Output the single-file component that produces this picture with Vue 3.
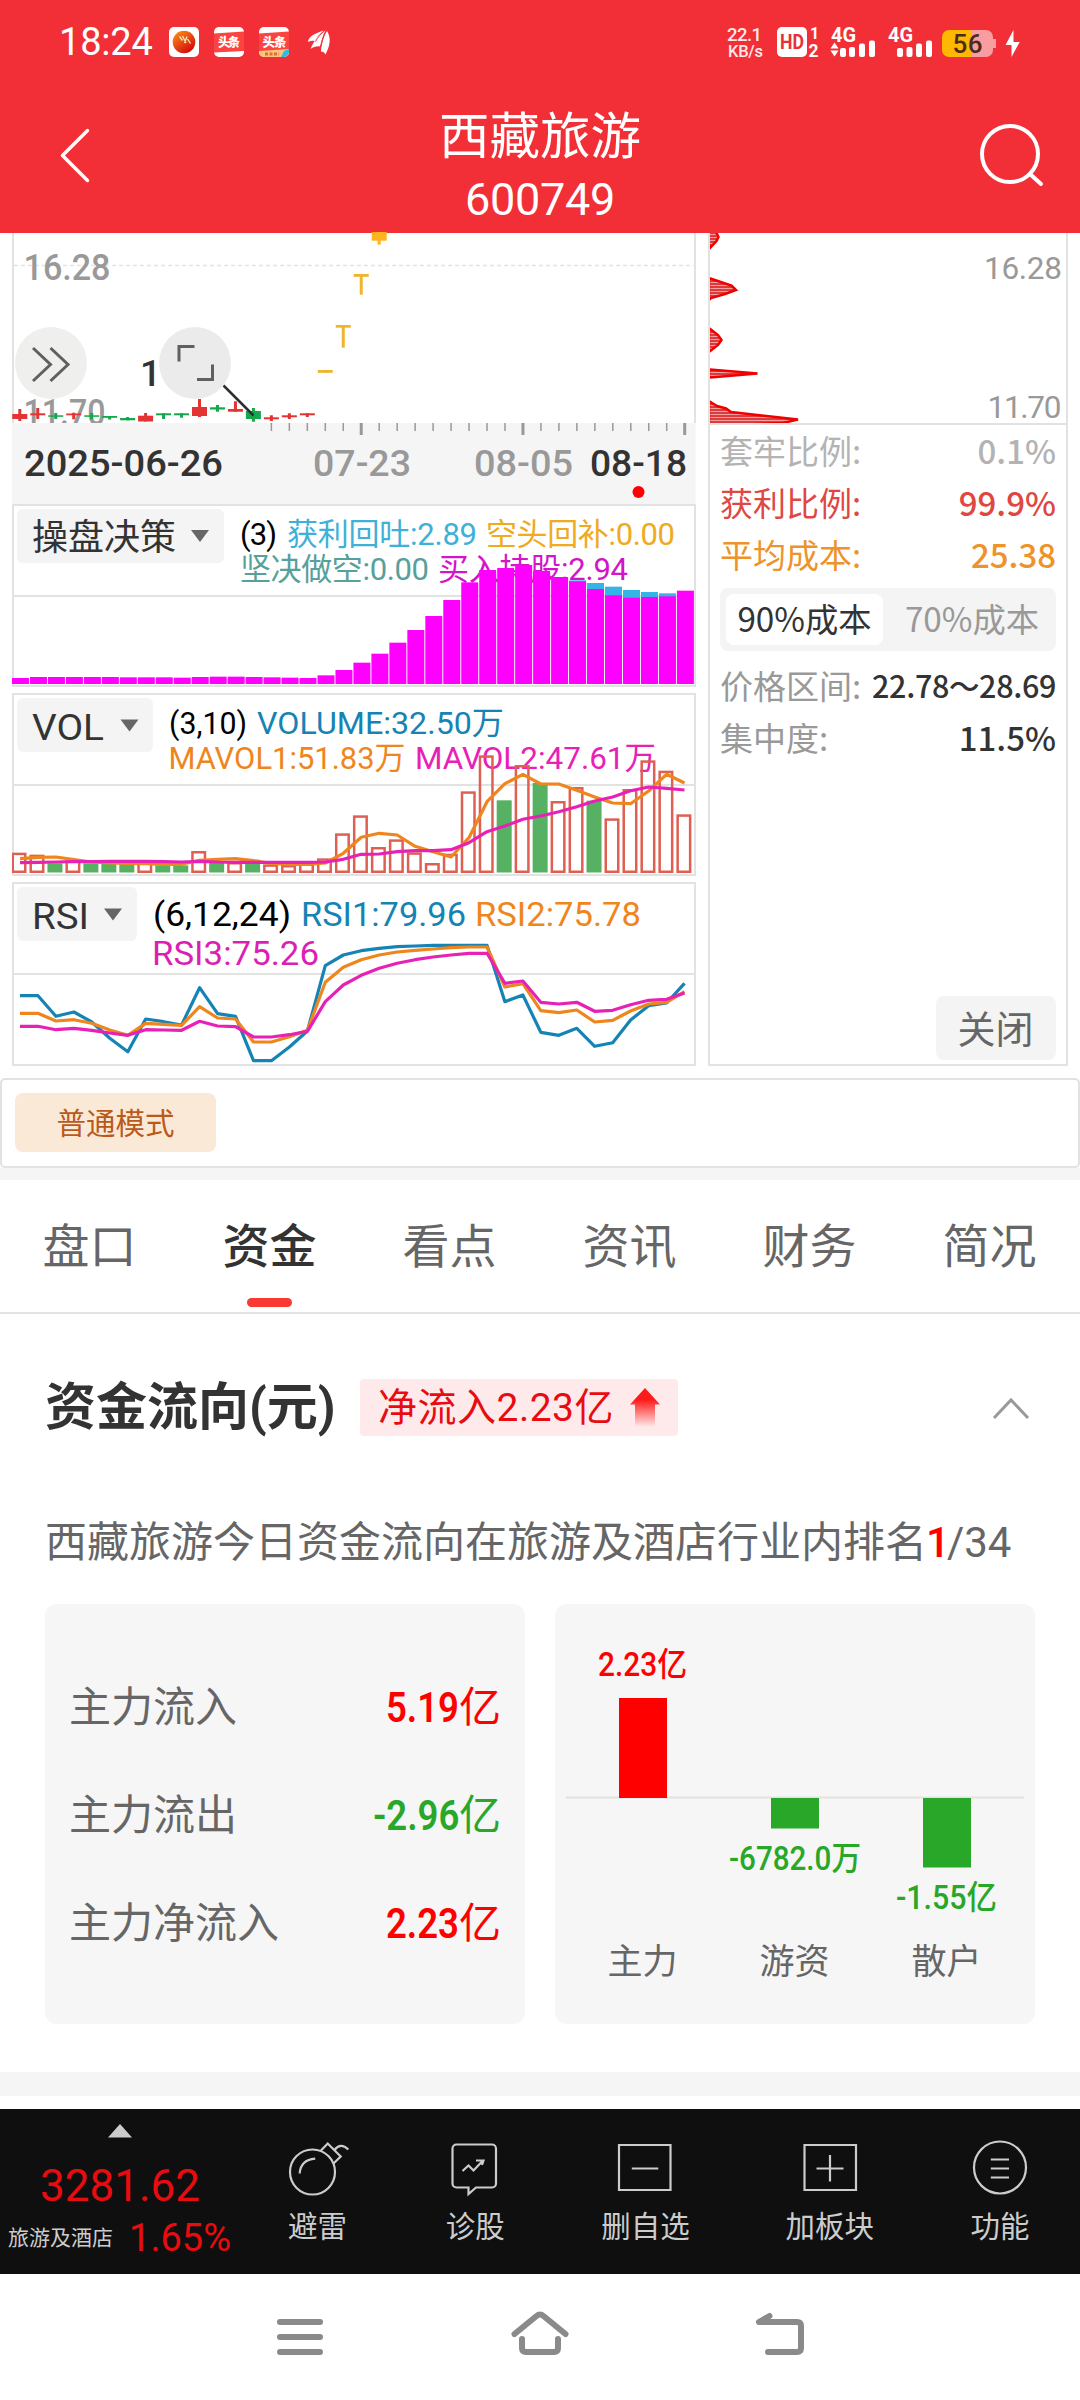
<script setup>
const STEP = 17.97
const cx = (i) => 19.8 + STEP * i

const R = '#e33333', G = '#12a84c', Y = '#f0b42f'
// [colour, body top, body bottom, wick top, wick bottom]
const candles = [
  [R, 414, 419, 409, 421], [R, 413.3, 415.3, 408, 419], [G, 415.3, 416.8, 413, 419], [R, 413.5, 415.3, 412.7, 419.3],
  [G, 415.3, 416.8, 413, 419.3], [G, 416, 417.8, 416, 419.5], [G, 418, 420.3, 417, 420.3], [R, 415.7, 421.5, 413, 421.5],
  [G, 413.3, 415.3, 413.3, 419], [G, 413.3, 415.3, 413.3, 417.7], [R, 407, 416, 399, 417], [G, 407.3, 409.5, 405, 411.7],
  [R, 409, 411.7, 401.3, 411.7], [G, 411, 419, 408, 421.7], [R, 417.3, 419.3, 415.3, 421], [R, 415.3, 417.3, 413.3, 419],
  [R, 413.3, 415.3, 413.3, 417], [Y, 370, 372.8, 370, 372.8], [Y, 325, 327.7, 325, 347.7], [Y, 274, 276.8, 274, 294.7],
  ['#ffb41f', 232, 240.7, 232, 244.7]
].map(([c, a, b, w1, w2], i) => ({ c, a, b, w1, w2, x: cx(i) }))

const ticks = Array.from({ length: 24 }, (_, k) => k + 14).map((i) => ({ x: cx(i), major: (i - 19) % 9 === 0 }))

const decTops = [549, 546, 546, 546, 546, 546, 547, 547, 547, 548, 546, 545, 545, 546, 547, 548, 549, 541, 525, 503, 476, 443, 405, 363, 315, 262, 225, 219, 210, 228, 246, 259, 282, 301, 308, 306, 304, 287]
const decBlue = { 31: 256, 32: 264, 33: 275, 34: 285, 35: 291, 36: 295 }
const decBars = decTops.map((t, i) => ({ x: 12 + STEP * i, y: 495 + t / 3, b: decBlue[i] ? 495 + decBlue[i] / 3 : null }))

const green = [2, 4, 5, 6, 8, 9, 11, 13, 27, 29, 32]
const volBars = [503, 509, 535, 526, 535, 535, 535, 526, 541, 541, 498, 529, 531, 524, 538, 540, 535, 520, 445, 391, 486, 463, 502, 534, 506, 319, 211, 346, 240, 294, 348, 306, 347, 400, 312, 226, 257, 388]
  .map((t, i) => ({ x: 11.5 + STEP * i, y: 685 + t / 3, g: green.includes(i) }))

const line = (arr, base) => arr.map((v, i) => `${(20 + 17.96 * i).toFixed(1)},${(base + v / 3).toFixed(1)}`).join(' ')
const vol1 = line([521, 517, 516, 524, 531, 534, 535, 536, 538, 538, 526, 523, 521, 527, 535, 538, 538, 534, 505, 457, 445, 450, 484, 500, 516, 458, 350, 296, 268, 297, 297, 316, 336, 354, 356, 318, 268, 294], 685)
const vol2 = line([533, 532, 531, 530, 530, 529, 529, 529, 530, 531, 529, 531, 532, 532, 532, 532, 532, 531, 523, 508, 507, 500, 497, 497, 494, 473, 440, 423, 403, 393, 380, 365, 348, 336, 317, 306, 310, 315], 685)
const rsi1 = line([362, 362, 424, 411, 441, 490, 530, 432, 440, 450, 338, 416, 424, 557, 557, 516, 468, 272, 240, 227, 220, 215, 213, 211, 211, 211, 211, 380, 360, 472, 481, 460, 514, 503, 435, 392, 384, 325], 875)
const rsi2 = line([415, 415, 438, 434, 445, 465, 481, 445, 448, 451, 395, 429, 432, 501, 501, 485, 466, 322, 277, 254, 240, 231, 226, 222, 218, 216, 216, 336, 326, 407, 413, 405, 441, 436, 408, 387, 382, 350], 875)
const rsi3 = line([454, 454, 464, 460, 466, 474, 481, 464, 465, 466, 439, 453, 455, 486, 486, 479, 469, 380, 330, 301, 280, 265, 254, 246, 240, 235, 235, 325, 318, 382, 387, 382, 409, 406, 389, 376, 373, 354], 875)

const chips = [
  '708,228 716,232 718.5,237 716.5,241 709,249',
  '709,278 731.5,285.5 736,290 725,294 711,298 709,300',
  '709,328 718,335 721.5,340 718,345 709,352',
  '709,369.5 757.5,373.5 709,377.5',
  '709,401 717,406 726,408.5 731,412 798,419.5 783,423 709,426'
]

const tabs = ['盘口', '资金', '看点', '资讯', '财务', '简况']
const flows = [
  { k: '主力流入', n: '5.19', c: 'up' },
  { k: '主力流出', n: '-2.96', c: 'down' },
  { k: '主力净流入', n: '2.23', c: 'up' }
]
</script>

<template>
  <div class="phone">
    <header class="top">
      <div class="status">
        <span class="clock">18:24</span>
        <svg class="apps" width="166" height="34" viewBox="167 25 166 34">
          <defs>
            <linearGradient id="ball" x1="0" y1="0" x2="0.7" y2="1"><stop offset="0" stop-color="#ff9a1a" /><stop offset="1" stop-color="#d4060c" /></linearGradient>
            <clipPath id="a2"><rect x="214" y="27" width="30" height="30" rx="5" /></clipPath>
            <clipPath id="a3"><rect x="259" y="27" width="30" height="30" rx="5" /></clipPath>
          </defs>
          <rect x="169" y="27" width="30" height="30" rx="5" fill="#fff" />
          <circle cx="184" cy="42" r="11.3" fill="url(#ball)" />
          <path d="M179.500 36.500l3 4M182.500 36l3.500 7M187 36.500l-2.500 6.500M187.500 39l3 4.500" stroke="#ffe9b8" stroke-width="1.300" fill="none" />
          <g clip-path="url(#a2)">
            <rect x="214" y="27" width="30" height="30" fill="#fff" />
            <path d="M214 33.500L244 31.500V51L214 52.500Z" fill="#fb4440" />
            <text x="218" y="46.500" font-size="12" font-weight="900" fill="#fff" textLength="22">头条</text>
          </g>
          <g clip-path="url(#a3)">
            <rect x="259" y="27" width="30" height="30" fill="#fff" />
            <path d="M259 33.500L289 31.500V52H259Z" fill="#fb4440" />
            <path d="M259 51L289 49V57H259Z" fill="#ffc37a" />
            <text x="262.500" y="46.500" font-size="12.500" font-weight="900" fill="#fff" textLength="24">头条</text>
            <path d="M265 54h14" stroke="#d5723a" stroke-width="3" stroke-dasharray="3 1.500" />
            <path d="M281 57l3-6 5-2v8z" fill="#26bfe8" />
          </g>
          <g fill="#fff">
            <path d="M308 42C308 37 315 33 324 30.500C319 34 316.500 37.500 315 41C312.500 40.500 310 41 308 42Z" />
            <path d="M310.500 49C314 41 318.500 34 325.500 30.500C322.500 36 321.500 41 320 46.500C316.500 46 313.500 47 310.500 49Z" />
            <path d="M321 51.500C321.500 44 323.500 36 327 31C331.500 38 330 46 325.500 54.500C324.500 52.500 323 51.500 321 51.500Z" />
          </g>
          <path d="M315.500 41.500C318 37 321 33.500 324.500 31M320.800 47C322 41 323.500 35.500 326 31.500" stroke="#f22f37" stroke-width="1" fill="none" />
        </svg>
        <svg class="signals" width="300" height="34" viewBox="724 25 300 34" fill="#fff">
          <g font-weight="500" fill="#ffe9e9">
            <text x="727" y="41" font-size="18.500" textLength="35">22.1</text>
            <text x="728" y="56.500" font-size="16.500" textLength="35">KB/s</text>
          </g>
          <rect x="777" y="27" width="30" height="30" rx="5" />
          <g font-weight="700">
            <text x="780" y="49" font-size="20" fill="#e8303a" textLength="24" lengthAdjust="spacingAndGlyphs">HD</text>
            <text x="810" y="38.500" font-size="16">1</text>
            <text x="808.500" y="56.500" font-size="17.500">2</text>
            <text x="831" y="42" font-size="20" textLength="25" lengthAdjust="spacingAndGlyphs">4G</text>
            <text x="888" y="42" font-size="20" textLength="25" lengthAdjust="spacingAndGlyphs">4G</text>
          </g>
          <path d="M830.500 48.500l4-6 4 6zM830.500 50.500l4 6 4-6z" />
          <rect x="840" y="48" width="6" height="9" rx="2" /><rect x="849" y="47" width="6" height="10" rx="2" /><rect x="859" y="43.500" width="6" height="13.500" rx="2" /><rect x="869" y="40.500" width="6" height="16.500" rx="2" />
          <rect x="897" y="48" width="6" height="9" rx="2" /><rect x="906.500" y="47" width="6" height="10" rx="2" /><rect x="916" y="43.500" width="6" height="13.500" rx="2" /><rect x="926" y="40.500" width="6" height="16.500" rx="2" />
          <path d="M971 30h15a7 7 0 0 1 7 7v2h3v9h-3v2a7 7 0 0 1-7 7h-15z" fill="#f99da0" />
          <path d="M971 30h-22a7 7 0 0 0-7 7v13a7 7 0 0 0 7 7h22z" fill="#ffb800" />
          <text x="952.500" y="53" font-size="26" font-weight="500" fill="#4a2c1a" textLength="30">56</text>
          <path d="M1013.500 30l-8 15h6v12l8.200-15h-6.200z" />
        </svg>
      </div>
      <div class="bar">
        <svg width="56" height="64" viewBox="46 124 56 64"><path d="M87.500 130.500L62.500 155.500L87.500 180.500" fill="none" stroke="#fff" stroke-width="3.500" stroke-linecap="round" stroke-linejoin="round" /></svg>
        <div class="name"><b>西藏旅游</b><span>600749</span></div>
        <svg width="72" height="72" viewBox="975 120 72 72" fill="none" stroke="#fff" stroke-width="4" stroke-linecap="round"><circle cx="1010" cy="154" r="28" /><path d="M1030 174L1041 184" /></svg>
      </div>
    </header>

    <section class="charts">
      <div class="left">
        <svg class="k" width="684" height="190" viewBox="12 233 684 190">
          <path d="M13 233V423M695 233V423" stroke="#e2e2e2" stroke-width="2" />
          <path d="M14 265.500H694" stroke="#e4e4e4" stroke-width="1.500" stroke-dasharray="4 3" />
          <g fill="#999" font-size="36" font-weight="500">
            <text x="23.500" y="280" textLength="87" lengthAdjust="spacingAndGlyphs">16.28</text>
            <text x="23.500" y="424.500" textLength="82" lengthAdjust="spacingAndGlyphs">11.70</text>
          </g>
          <text x="140" y="385.500" font-size="37" font-weight="500" fill="#333">1</text>
          <circle cx="51" cy="363" r="36" fill="#efefee" />
          <circle cx="195" cy="363" r="36" fill="#ebebeb" />
          <g fill="none" stroke="#606060" stroke-width="3">
            <path d="M33 348l17.500 16.500L33 381M50.500 348L68 364.500L50.500 381" />
            <path d="M194.500 346.500H179V361.500M197 379.500H212.500V364.500" />
          </g>
          <g v-for="(c, i) in candles" :key="i" :fill="c.c">
            <rect :x="c.x - 7.5" :y="c.a" width="15" :height="c.b - c.a" />
            <rect :x="c.x - 1.5" :y="c.w1" width="3" :height="c.w2 - c.w1" />
          </g>
          <path d="M223.500 385.500L253.500 415.500" stroke="#2c302e" stroke-width="2.500" />
        </svg>
        <svg class="dates" width="684" height="81" viewBox="12 423 684 81">
          <rect x="12" y="423" width="683.500" height="82" fill="#f5f5f5" />
          <rect v-for="t in ticks" :key="t.x" :x="t.x - (t.major ? 1.5 : 0.75)" y="423" :width="t.major ? 3 : 1.500" :height="t.major ? 12 : 8" fill="#999" />
          <g font-size="36" font-weight="500" fill="#999">
            <text x="24" y="476" fill="#333" textLength="199" lengthAdjust="spacingAndGlyphs">2025-06-26</text>
            <text x="313" y="476" textLength="98" lengthAdjust="spacingAndGlyphs">07-23</text>
            <text x="474" y="476" textLength="99" lengthAdjust="spacingAndGlyphs">08-05</text>
            <text x="590" y="476" fill="#333" textLength="97" lengthAdjust="spacingAndGlyphs">08-18</text>
          </g>
          <circle cx="638.500" cy="492" r="6" fill="#f00" />
        </svg>
        <svg class="ind" width="684" height="183" viewBox="12 504 684 183">
          <path d="M13 505H695V686H13ZM13 596H695" class="grid" />
          <rect x="17" y="509" width="207" height="54" rx="6" fill="#f4f4f4" />
          <text x="32" y="550" font-size="36" fill="#333">操盘决策</text>
          <path d="M191 530H209L200 542Z" fill="#666" />
          <g font-size="31">
            <text x="240" y="545" fill="#000" textLength="37">(3)</text>
            <text x="287" y="545" fill="#3fb0d8" textLength="190">获利回吐:2.89</text>
            <text x="486" y="545" fill="#f0aa1e" textLength="189">空头回补:0.00</text>
            <text x="240" y="580" fill="#58a09a" textLength="189">坚决做空:0.00</text>
            <text x="438" y="580" fill="#d414c8" textLength="190">买入持股:2.94</text>
          </g>
          <g v-for="(b, i) in decBars" :key="i">
            <rect v-if="b.b" :x="b.x" :y="b.b" width="17" :height="684 - b.b" fill="#37b4e6" />
            <rect :x="b.x" :y="b.y" width="17" :height="684 - b.y" fill="#f0f" />
          </g>
        </svg>
        <svg class="ind" width="684" height="183" viewBox="12 693 684 183">
          <path d="M13 694H695V875H13ZM13 785H695" class="grid" />
          <rect x="17" y="698" width="136" height="54" rx="6" fill="#f4f4f4" />
          <text x="32" y="739.500" font-size="36" fill="#333" textLength="72" lengthAdjust="spacingAndGlyphs">VOL</text>
          <path d="M120.500 719.500H138.500L129.500 731.500Z" fill="#666" />
          <g font-size="32">
            <text x="169" y="734" fill="#000" textLength="78" lengthAdjust="spacingAndGlyphs">(3,10)</text>
            <text x="257" y="734" fill="#1683b5" textLength="247" lengthAdjust="spacingAndGlyphs">VOLUME:32.50万</text>
            <text x="168.500" y="769" fill="#ef861d" textLength="237" lengthAdjust="spacingAndGlyphs">MAVOL1:51.83万</text>
            <text x="415" y="769" fill="#e821b6" textLength="241" lengthAdjust="spacingAndGlyphs">MAVOL2:47.61万</text>
          </g>
          <template v-for="(b, i) in volBars" :key="i">
            <rect v-if="b.g" :x="b.x" :y="b.y" width="15" :height="872.5 - b.y" fill="#57b163" />
            <rect v-else :x="b.x + 1.25" :y="b.y + 1.25" width="12.500" :height="870.5 - b.y" fill="none" stroke="#de6052" stroke-width="2.500" />
          </template>
          <polyline :points="vol1" class="ln" stroke="#ef861d" />
          <polyline :points="vol2" class="ln" stroke="#e821b6" />
        </svg>
        <svg class="ind last" width="684" height="184" viewBox="12 882 684 184">
          <path d="M13 883H695V1065H13ZM13 974H695" class="grid" />
          <rect x="17" y="887" width="120" height="54" rx="6" fill="#f4f4f4" />
          <text x="32" y="929" font-size="36" fill="#333" textLength="57" lengthAdjust="spacingAndGlyphs">RSI</text>
          <path d="M104 908.500H122L113 920.500Z" fill="#666" />
          <g font-size="33.500">
            <text x="153" y="926" fill="#000" textLength="138" lengthAdjust="spacingAndGlyphs">(6,12,24)</text>
            <text x="301" y="926" fill="#1683b5" textLength="165" lengthAdjust="spacingAndGlyphs">RSI1:79.96</text>
            <text x="475" y="926" fill="#ef861d" textLength="166" lengthAdjust="spacingAndGlyphs">RSI2:75.78</text>
            <text x="152" y="965" fill="#dc1fb4" textLength="167" lengthAdjust="spacingAndGlyphs">RSI3:75.26</text>
          </g>
          <polyline :points="rsi1" class="ln" stroke="#1683b5" />
          <polyline :points="rsi2" class="ln" stroke="#ef861d" />
          <polyline :points="rsi3" class="ln" stroke="#e821b6" />
        </svg>
      </div>

      <div class="right">
        <svg class="dist" width="360" height="192" viewBox="708 233 360 192">
          <defs>
            <pattern id="stripe" width="6" height="3" patternUnits="userSpaceOnUse"><rect width="6" height="3" fill="#de3c3c" /><rect width="6" height="1" fill="#f0a0a0" /></pattern>
            <clipPath id="inside"><rect x="710" y="233" width="350" height="190" /></clipPath>
          </defs>
          <g clip-path="url(#inside)"><polygon v-for="p in chips" :key="p" :points="p" fill="url(#stripe)" stroke="#f00000" stroke-width="2.500" /></g>
          <path d="M709 233V425M1067 233V425M708 424H1068" fill="none" stroke="#e2e2e2" stroke-width="2" />
          <g fill="#999" font-size="31.500">
            <text x="984" y="279" textLength="78">16.28</text>
            <text x="987.500" y="418" textLength="74">11.70</text>
          </g>
        </svg>
        <div class="stats">
          <div class="row pale"><span>套牢比例:</span><b>0.1%</b></div>
          <div class="row red"><span>获利比例:</span><b>99.9%</b></div>
          <div class="row amber"><span>平均成本:</span><b>25.38</b></div>
          <div class="seg"><span class="on">90%成本</span><span>70%成本</span></div>
          <div class="row dark"><span>价格区间:</span><b class="small">22.78～28.69</b></div>
          <div class="row dark"><span>集中度:</span><b>11.5%</b></div>
          <button class="close">关闭</button>
        </div>
      </div>
    </section>

    <div class="mode"><span>普通模式</span></div>
    <nav class="tabs"><span v-for="t in tabs" :key="t" :class="{ active: t === '资金' }">{{ t }}</span></nav>

    <section class="fund">
      <div class="head">
        <h2>资金流向(元)</h2>
        <div class="badge">
          <span>净流入2.23亿</span>
          <svg width="30" height="40" viewBox="0 0 30 40"><defs><linearGradient id="fade" x1="0" y1="0" x2="0" y2="1"><stop offset="0.3" stop-color="#ff1a1a" /><stop offset="1" stop-color="#ff1a1a" stop-opacity="0" /></linearGradient></defs><path d="M15 0L30 16.500H25V39H5V16.500H0Z" fill="url(#fade)" /></svg>
        </div>
        <svg class="chev" width="38" height="24" viewBox="0 0 38 24"><path d="M2 21L19 3L36 21" fill="none" stroke="#999" stroke-width="3" /></svg>
      </div>
      <p class="rank">西藏旅游今日资金流向在旅游及酒店行业内排名<b>1</b>/34</p>
      <div class="cards">
        <div class="card list">
          <div v-for="f in flows" :key="f.k" class="flow"><span>{{ f.k }}</span><span :class="f.c"><i>{{ f.n }}</i>亿</span></div>
        </div>
        <div class="card">
          <svg width="480" height="420" viewBox="555 1604 480 420">
            <path d="M566 1797.500H1024" stroke="#e2e2e2" stroke-width="2" />
            <rect x="619" y="1698" width="48" height="100" fill="#f00" />
            <rect x="771" y="1798" width="48" height="30.500" fill="#28a728" />
            <rect x="923" y="1798" width="48" height="69.500" fill="#28a728" />
            <g font-size="33" font-weight="500">
              <text x="598" y="1676" fill="#f00" textLength="89" lengthAdjust="spacingAndGlyphs">2.23亿</text>
              <text x="729" y="1870" fill="#28a728" textLength="132" lengthAdjust="spacingAndGlyphs">-6782.0万</text>
              <text x="896" y="1909" fill="#28a728" textLength="101" lengthAdjust="spacingAndGlyphs">-1.55亿</text>
            </g>
            <g font-size="35" fill="#666" text-anchor="middle">
              <text x="642.500" y="1974">主力</text><text x="794.500" y="1974">游资</text><text x="946.500" y="1974">散户</text>
            </g>
          </svg>
        </div>
      </div>
    </section>
    <div class="band"></div>

    <footer class="tools">
      <div class="index">
        <svg width="24" height="14" viewBox="0 0 24 14"><path d="M12 0L24 13.500H0Z" fill="#ccc" /></svg>
        <strong>3281.62</strong>
        <div><small>旅游及酒店</small><em>1.65%</em></div>
      </div>
      <div class="items">
        <div><svg width="64" height="62" viewBox="285.500 2138 64 62"><circle cx="312" cy="2172" r="22.500" /><path d="M319.500 2151.500L327.200 2143.500L340.200 2156.500L332.500 2164M334 2150Q340 2142 347.800 2149.500M299.200 2173.500Q300 2160 314.700 2158.700" /></svg><span>避雷</span></div>
        <div><svg width="60" height="62" viewBox="444.500 2138 60 62"><path d="M456 2144.500H491.500a4 4 0 0 1 4 4V2183.500a4 4 0 0 1-4 4H475.500L468 2194V2187.500H456a4 4 0 0 1-4-4V2148.500a4 4 0 0 1 4-4ZM462 2171L468 2165.500L473 2170.500L482.500 2160.500M475.500 2160.500H483L481.500 2165" /></svg><span>诊股</span></div>
        <div><svg width="60" height="62" viewBox="615.700 2138 60 62"><path d="M619.700 2145H671.200V2190H619.700ZM632.500 2168.500H659" /></svg><span>删自选</span></div>
        <div><svg width="60" height="62" viewBox="799.500 2138 60 62"><path d="M804 2145H855.500V2190H804ZM816 2168.500H843M829.500 2155V2181.500" /></svg><span>加板块</span></div>
        <div><svg width="60" height="62" viewBox="970.700 2138 60 62"><circle cx="1000.700" cy="2167.500" r="26" /><path d="M991.500 2159.500H1009.700M991.500 2168.500H1009.700M991.500 2177.500H1009.700" /></svg><span>功能</span></div>
      </div>
    </footer>
    <div class="sys">
      <svg width="52" height="42" viewBox="274 2316 52 42"><path d="M280 2322H320M280 2337H320M280 2352H320" /></svg>
      <svg width="64" height="48" viewBox="508 2308 64 48"><path d="M514.500 2334L536.500 2316Q540 2313 543.500 2316L565.500 2334M522 2339V2348Q522 2352 526 2352H554Q558 2352 558 2348V2339" /></svg>
      <svg width="52" height="46" viewBox="754 2311 52 46"><path d="M769.500 2316L759 2322H797Q801 2322 801 2326V2348Q801 2352 797 2352H768" /></svg>
    </div>
  </div>
</template>

<style>
body { margin: 0; background: #fff; }
</style>

<style scoped>
.phone { width: 1080px; height: 2400px; display: flex; flex-direction: column; background: #fff; overflow: hidden; font-family: Roboto, "Noto Sans CJK SC", sans-serif; color: #333; }
.phone svg { display: block; flex: none; }
.top { height: 233px; flex: none; background: #f22f37; color: #fff; box-sizing: border-box; padding-top: 25px; }
.status { display: flex; align-items: center; height: 34px; padding: 0 56px 0 59px; }
.clock { font-size: 38px; line-height: 34px; width: 108px; letter-spacing: -.2px; }
.phone .signals, .phone .k { overflow: visible; }
.signals { margin-left: auto; }
.bar { display: flex; justify-content: space-between; padding: 45px 33px 0 46px; align-items: flex-start; }
.bar > svg:first-child { margin-top: 20px; }
.bar > svg:last-child { margin-top: 16px; }
.name { display: flex; flex-direction: column; align-items: center; padding-left: 3px; }
.name b { font-weight: 400; font-size: 50.5px; line-height: 64px; padding-top: 1px; }
.name span { font-size: 45px; line-height: 61px; letter-spacing: -.3px; }
.charts { display: flex; height: 845px; flex: none; padding-left: 12px; gap: 12px; }
.ind { margin-bottom: 6px; }
.grid { fill: none; stroke: #e2e2e2; stroke-width: 2; }
.ln { fill: none; stroke-width: 3.2; stroke-linejoin: round; }
.right { width: 360px; }
.stats { box-sizing: border-box; height: 641px; border: 2px solid #e2e2e2; border-top: 0; padding: 0 9px 4px 10px; display: flex; flex-direction: column; font-family: "Noto Sans CJK SC", sans-serif; }
.row { display: flex; justify-content: space-between; align-items: center; height: 52px; font-size: 33px; line-height: 49px; white-space: nowrap; }
.row > * { margin-top: -2px; }
.row b { font-weight: 500; padding-right: 1px; }
.row b.small { font-size: 30.5px; letter-spacing: -.35px; }
.pale { color: #b3b3b3; }
.red { color: #df4743; }
.amber { color: #ee9329; }
.row.dark { color: #999; }
.row.dark b { color: #333; }
.seg { display: flex; background: #f4f4f4; border-radius: 8px; height: 63px; box-sizing: border-box; padding: 6px 0 6px 6px; margin: 7px 1px 9px 0; font-size: 33.3px; line-height: 48px; color: #999; }
.seg span { flex: 1; text-align: center; padding-left: 5px; }
.seg .on { background: #fff; border-radius: 8px; color: #333; flex: 0 0 157px; padding-left: 0; }
.close { border: 0; background: #f4f4f4; border-radius: 8px; width: 120px; height: 64px; margin-top: auto; margin-right: 1px; align-self: flex-end; font: 38px/60px "Noto Sans CJK SC", sans-serif; color: #666; padding: 0 1px 2px 0; }
.mode { box-sizing: border-box; height: 90px; flex: none; border: 2px solid #e2e2e2; border-radius: 5px; padding: 13px 13px; }
.mode span { display: block; width: 201px; height: 59px; line-height: 62px; border-radius: 8px; background: #fbe9d8; color: #b9591a; font-size: 29.5px; text-align: center; }
.tabs { display: flex; height: 132px; flex: none; border-top: 12px solid #f5f5f5; border-bottom: 2px solid #e2e2e2; }
.tabs span { width: 179px; padding-right: 1px; display: flex; flex-direction: column; align-items: center; font-size: 47px; line-height: 133px; height: 132px; color: #666; }
.tabs .active { color: #333; font-weight: 500; }
.tabs .active::after { content: ""; width: 45px; height: 9px; border-radius: 4.5px; background: #f93a33; margin-top: -15px; }
.fund { padding: 65px 45px 0; height: 693px; flex: none; box-sizing: content-box; }
.head { display: flex; align-items: center; height: 57px; }
h2 { margin: 0; font-size: 51px; line-height: 59px; font-weight: 700; width: 315px; white-space: nowrap; }
.badge { width: 318px; height: 57px; box-sizing: border-box; padding: 0 18px 0 18px; border-radius: 4px; background: #ffeaeb; color: #e80c10; display: flex; justify-content: space-between; align-items: center; font-size: 39px; letter-spacing: .5px; line-height: 58px; white-space: nowrap; }
.chev { margin-left: auto; margin-right: 5px; margin-top: 3px; }
.rank { margin: 75px 0 0; height: 64px; line-height: 64px; font-size: 42px; color: #666; white-space: nowrap; }
.rank b { color: #f00; font-weight: 500; margin: 0 -3px 0 -1px; }
.cards { display: flex; gap: 30px; margin-top: 29px; }
.card { width: 480px; height: 420px; border-radius: 12px; background: #f6f6f6; box-sizing: border-box; }
.list { padding: 45px 24px; }
.flow { height: 108px; display: flex; justify-content: space-between; align-items: center; font-size: 42px; color: #666; }
.up { color: #f00; }
.down { color: #28a728; }
.flow i { font-style: normal; font-weight: 600; display: inline-block; transform: scaleX(.87); transform-origin: right; }
.band { height: 24px; flex: none; background: #f5f5f5; margin-bottom: 13px; }
.tools { height: 165px; flex: none; background: #0f0f0f; display: flex; }
.index { width: 240px; display: flex; flex-direction: column; align-items: center; padding-top: 15px; box-sizing: border-box; color: #e80c10; }
.index strong { font-weight: 400; font-size: 44px; line-height: 50px; margin-top: 23px; }
.index div { display: flex; align-items: center; width: 100%; box-sizing: border-box; padding: 0 9px 0 8px; justify-content: space-between; line-height: 50px; margin-top: 2px; }
.index small { font-size: 21px; color: #ccc; }
.index em { font-style: normal; font-size: 38px; }
.items { flex: 1; display: flex; justify-content: space-between; padding: 29px 50px 0 45.5px; }
.items > div { display: flex; flex-direction: column; align-items: center; color: #ccc; font-size: 29.5px; line-height: 39px; }
.items svg { fill: none; stroke: #ccc; stroke-width: 2.2; margin-bottom: 8px; }
.sys { flex: 1; display: flex; justify-content: space-between; padding: 34px 274px 0; align-items: flex-start; }
.sys svg { fill: none; stroke: #8a8a8a; stroke-width: 6; stroke-linecap: round; stroke-linejoin: round; }
.sys svg:first-child { margin-top: 8px; }
.sys svg:last-child { margin-top: 3px; }
</style>
